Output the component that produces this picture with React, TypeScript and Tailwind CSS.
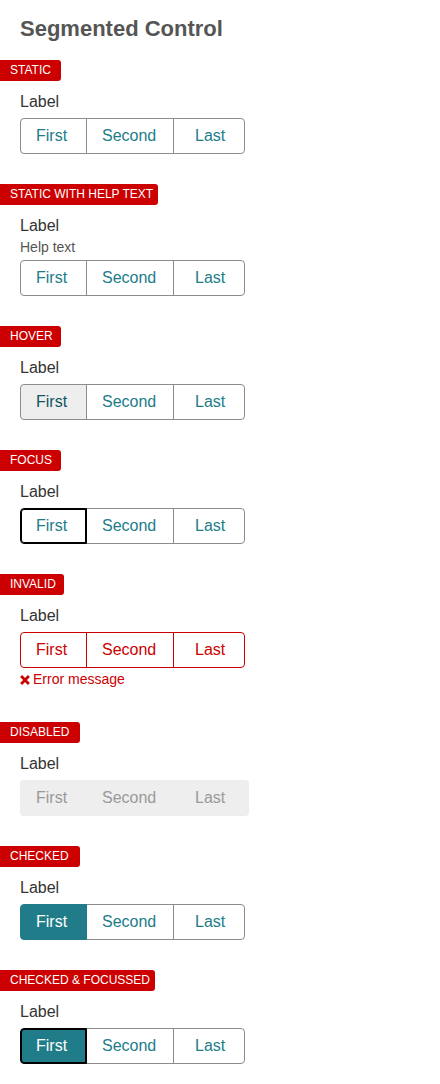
import { useId } from "react";
import clsx from "clsx";

type Variant = "static" | "hover" | "focus" | "invalid" | "disabled" | "checked" | "checkedFocus";

interface Example {
  tag: string;
  tagWidth: string;
  variant: Variant;
  help?: string;
  error?: string;
}

const examples: Example[] = [
  { tag: "STATIC", tagWidth: "w-[61px]", variant: "static" },
  { tag: "STATIC WITH HELP TEXT", tagWidth: "w-[158px]", variant: "static", help: "Help text" },
  { tag: "HOVER", tagWidth: "w-[61px]", variant: "hover" },
  { tag: "FOCUS", tagWidth: "w-[61px]", variant: "focus" },
  { tag: "INVALID", tagWidth: "w-16", variant: "invalid", error: "Error message" },
  { tag: "DISABLED", tagWidth: "w-20", variant: "disabled" },
  { tag: "CHECKED", tagWidth: "w-20", variant: "checked" },
  { tag: "CHECKED & FOCUSSED", tagWidth: "w-[155px]", variant: "checkedFocus" },
];

const options = [
  { text: "First", size: "w-[67px] pl-[15px] rounded-l" },
  { text: "Second", size: "-ml-px w-[88px] pl-[15px]" },
  { text: "Last", size: "-ml-px w-[72px] pl-[21px] rounded-r" },
];

const baseColours: Record<Variant, string> = {
  static: "border-[#8c8c8c] text-[#217c89]",
  hover: "border-[#8c8c8c] text-[#217c89]",
  focus: "border-[#8c8c8c] text-[#217c89]",
  invalid: "border-[#cc0000] text-[#cc0000]",
  disabled: "border-[#eeeeee] bg-[#eeeeee] text-[#999999]",
  checked: "border-[#8c8c8c] text-[#217c89]",
  checkedFocus: "border-[#8c8c8c] text-[#217c89]",
};

const firstColours: Record<Variant, string> = {
  static: baseColours.static,
  hover: "border-[#8c8c8c] bg-[#eeeeee] text-[#10565f]",
  focus: "z-10 border-black text-[#217c89] inset-ring inset-ring-black",
  invalid: baseColours.invalid,
  disabled: baseColours.disabled,
  checked: "z-10 border-[#217c89] bg-[#217c89] text-white",
  checkedFocus: "z-10 border-black bg-[#217c89] text-white inset-ring inset-ring-black",
};

function SegmentedControl({ variant, help, error }: Omit<Example, "tag" | "tagWidth">) {
  const id = useId();
  const disabled = variant === "disabled";
  const checked = variant === "checked" || variant === "checkedFocus";

  return (
    <fieldset
      className="px-5 pt-[9px]"
      disabled={disabled}
      aria-describedby={help || error ? `${id}-note` : undefined}
    >
      <legend className="float-left w-full text-base leading-6 text-[#333333]">Label</legend>
      {help && (
        <p id={`${id}-note`} className="clear-both text-sm leading-[18px] text-[#555555]">
          {help}
        </p>
      )}
      <div className="clear-both flex pt-1">
        <div className={clsx("flex", disabled && "rounded bg-[#eeeeee] pr-1")}>
          {options.map((option, index) => (
            <label
              key={option.text}
              className={clsx(
                "relative flex h-9 cursor-pointer border pt-[5px] text-base leading-6",
                option.size,
                index === 0 ? firstColours[variant] : baseColours[variant],
              )}
            >
              <input
                type="radio"
                name={id}
                defaultChecked={checked && index === 0}
                className="sr-only"
              />
              {option.text}
            </label>
          ))}
        </div>
      </div>
      {error && (
        <p
          id={`${id}-note`}
          className="flex items-center gap-[3px] pb-px text-sm leading-[23px] text-[#cc0000]"
        >
          <svg className="size-2.5" viewBox="0 0 10 10" aria-hidden="true">
            <path d="M1.1 1.1 8.9 8.9M8.9 1.1 1.1 8.9" stroke="currentColor" strokeWidth="2.8" />
          </svg>
          {error}
        </p>
      )}
    </fieldset>
  );
}

export default function App() {
  return (
    <main className="min-h-screen bg-white pb-5 font-['Liberation_Sans',Arial,sans-serif]">
      <h1 className="px-5 pt-[15px] pb-[17px] text-[22px] leading-7 font-bold text-[#555555]">
        Segmented Control
      </h1>
      <div className="flex flex-col gap-[30px]">
        {examples.map((example) => (
          <section key={example.tag}>
            <h2
              className={clsx(
                "h-[21px] rounded-r-[3px] bg-[#cc0000] pl-2.5 text-xs leading-5 whitespace-nowrap text-white",
                example.tagWidth,
              )}
            >
              {example.tag}
            </h2>
            <SegmentedControl
              variant={example.variant}
              help={example.help}
              error={example.error}
            />
          </section>
        ))}
      </div>
    </main>
  );
}
